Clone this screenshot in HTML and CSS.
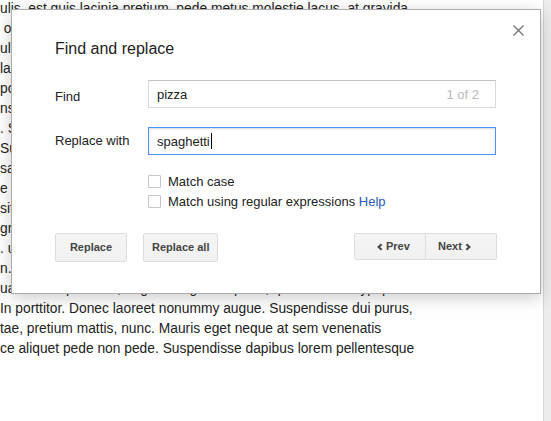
FILE: index.html
```html
<!DOCTYPE html>
<html>
<head>
<meta charset="utf-8">
<link rel="stylesheet" href="styles.css">
</head>
<body>
<div class="page">
  <div class="doc">
    <div class="line">ulis, est quis lacinia pretium, pede metus molestie lacus, at gravida</div>
    <div class="line">&nbsp;orci a tellus. Maecenas pharetra, nunc nec semper dictum, lectus</div>
    <div class="line">ultrices posuere cubilia Curae; Nullam ut libero eget metus</div>
    <div class="line">lacus ut nisi. Integer volutpat, lorem nec tincidunt</div>
    <div class="line">porta lorem, sed blandit magna nulla vitae</div>
    <div class="line">nse ctetuer adipiscing elit. Donec odio</div>
    <div class="line">. Sed egestas, ante et vulputate volutpat</div>
    <div class="line">Suspendisse potenti. Praesent mattis</div>
    <div class="line">sapien ut nunc. Vestibulum ante</div>
    <div class="line">e enim sit amet venenatis</div>
    <div class="line">sit amet, consectetuer</div>
    <div class="line">gravida nisl a arcu</div>
    <div class="line">. ut pretium nunc</div>
    <div class="line">n. Nulla facilisi</div>
    <div class="line">uat. Etiam pharetra, augue in egestas porta, quam mauris typi pede</div>
    <div class="line">In porttitor. Donec laoreet nonummy augue. Suspendisse dui purus,</div>
    <div class="line">tae, pretium mattis, nunc. Mauris eget neque at sem venenatis</div>
    <div class="line">ce aliquet pede non pede. Suspendisse dapibus lorem pellentesque</div>
  </div>
  <div class="scrollbar"></div>
</div>

<div class="dialog">
  <div class="close">
    <svg width="11" height="11" viewBox="0 0 11 11"><path d="M0.5 0.5L10.5 10.5M10.5 0.5L0.5 10.5" stroke="#777" stroke-width="1.4" fill="none"/></svg>
  </div>
  <div class="title">Find and replace</div>
  <div class="form">
    <div class="label label-find">Find</div>
    <div class="input"><span class="value">pizza</span><span class="count">1 of 2</span></div>
    <div class="label">Replace with</div>
    <div class="input focused"><span class="value">spaghetti</span><span class="caret"></span></div>
  </div>
  <div class="options">
    <div class="option"><span class="checkbox"></span><span>Match case</span></div>
    <div class="option"><span class="checkbox"></span><span>Match using regular expressions <a class="help">Help</a></span></div>
  </div>
  <div class="buttons">
    <div class="btn">Replace</div>
    <div class="btn">Replace all</div>
    <div class="nav">
      <div class="btn prev"><svg width="6" height="8" viewBox="0 0 6 8"><path d="M4.6 1.2L1.6 4L4.6 6.8" stroke="#444" stroke-width="2" fill="none"/></svg><span>Prev</span></div>
      <div class="btn next"><span>Next</span><svg width="6" height="8" viewBox="0 0 6 8"><path d="M1.4 1.2L4.4 4L1.4 6.8" stroke="#444" stroke-width="2" fill="none"/></svg></div>
    </div>
  </div>
</div>
</body>
</html>
```
FILE: styles.css
```css
html, body {
  margin: 0;
  padding: 0;
  background: #fff;
  overflow: hidden;
  font-family: "Liberation Sans", Arial, sans-serif;
}

.page {
  display: flex;
  height: 421px;
}

.doc {
  flex: 1;
  margin-top: -1px;
  font-size: 13.8px;
  line-height: 20px;
  color: #222;
  white-space: nowrap;
  overflow: hidden;
}

.scrollbar {
  width: 7px;
  background: #ececec;
  border-left: 1px solid #d6d6d6;
}

.dialog {
  position: absolute;
  left: 11px;
  top: 9px;
  width: 530px;
  box-sizing: border-box;
  border: 1px solid #acacac;
  background: #fff;
  box-shadow: 0 4px 16px rgba(0, 0, 0, 0.2);
  padding: 29px 44px 31px 43px;
  color: #222;
  font-size: 13px;
}

.close {
  position: absolute;
  top: 15px;
  right: 16px;
  width: 11px;
  height: 11px;
  line-height: 0;
}

.title {
  font-size: 16px;
  line-height: 20px;
  color: #222;
}

.form {
  display: grid;
  grid-template-columns: 93px 1fr;
  row-gap: 19px;
  align-items: center;
  margin-top: 21px;
}

.label {
  line-height: 16px;
}

.label-find {
  padding-top: 6px;
}

.input {
  height: 28px;
  box-sizing: border-box;
  border: 1px solid #d9d9d9;
  border-top-color: #c0c0c0;
  display: flex;
  align-items: center;
  padding: 0 16px 0 8px;
  color: #222;
}

.input.focused {
  border-color: #4d90fe;
  box-shadow: inset 0 1px 2px rgba(0, 0, 0, 0.15);
}

.count {
  margin-left: auto;
  color: #b8b8b8;
}

.caret {
  width: 1px;
  height: 16px;
  background: #000;
  margin-left: 1px;
}

.options {
  margin: 16px 0 0 93px;
}

.option {
  display: flex;
  align-items: center;
  height: 20px;
}

.checkbox {
  width: 13px;
  height: 13px;
  box-sizing: border-box;
  border: 1px solid #c6c6c6;
  border-radius: 1px;
  margin-right: 7px;
}

.help {
  color: #2759b8;
}

.buttons {
  display: flex;
  margin-top: 22px;
}

.btn {
  height: 27px;
  line-height: 27px;
  min-width: 54px;
  padding: 0 8px;
  border: 1px solid #dcdcdc;
  border-radius: 2px;
  background: linear-gradient(#f5f5f5, #f1f1f1);
  color: #444;
  font-size: 11px;
  font-weight: bold;
  text-align: center;
  margin-right: 16px;
}

.nav {
  margin-left: auto;
  margin-right: -1px;
  display: flex;
}

.nav .btn {
  margin-right: 0;
  display: flex;
  align-items: center;
  gap: 3px;
  min-width: 0;
  box-sizing: border-box;
}

.btn.prev {
  width: 72px;
  padding: 0 0 0 22px;
  border-radius: 2px 0 0 2px;
}

.btn.next {
  width: 71px;
  padding: 0 0 0 12px;
  border-left: 0;
  border-radius: 0 2px 2px 0;
}
```
